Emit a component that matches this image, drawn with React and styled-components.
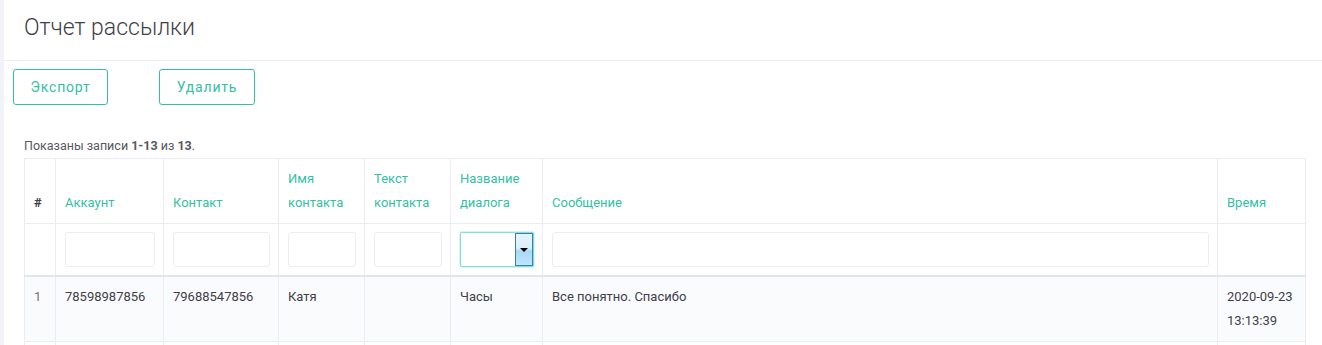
import React from 'react'
import styled, { createGlobalStyle } from 'styled-components'

const GlobalStyle = createGlobalStyle`
  html, body {
    margin: 0;
    padding: 0;
    background: #f2f3f8;
    font-family: Roboto, "Noto Sans", "Liberation Sans", sans-serif;
  }
`

const Page = styled.div`
  display: flex;
  height: 345px;
  overflow: hidden;
  padding-left: 4px;
`

const Portlet = styled.div`
  flex: 1;
  background: #fff;
  display: flex;
  flex-direction: column;
`

const PortletHead = styled.div`
  height: 61px;
  flex-shrink: 0;
  border-bottom: 1px solid #ebedf2;
  display: flex;
  align-items: center;
  padding-left: 20px;
  padding-bottom: 6px;
  box-sizing: border-box;
`

const Title = styled.h3`
  margin: 0;
  font-size: 23px;
  font-weight: 300;
  color: #3f4047;
`

const Toolbar = styled.div`
  display: flex;
  gap: 51px;
  padding: 8px 0 0 9px;
`

const OutlineButton = styled.button`
  height: 36px;
  width: ${p => p.w}px;
  background: #fff;
  border: 1px solid #34bfa3;
  border-radius: 3px;
  color: #34bfa3;
  font-family: inherit;
  font-size: 14px;
  font-weight: 400;
  letter-spacing: 0.8px;
  padding: 0;
  cursor: pointer;
`

const Summary = styled.div`
  margin: 33px 0 4px 20px;
  font-size: 12.5px;
  color: #575962;
  line-height: 16px;
  b { font-weight: 700; }
`

const TableWrap = styled.div`
  padding: 0 13px 0 20px;
`

const Table = styled.table`
  width: 1282px;
  border-collapse: collapse;
  table-layout: fixed;
  font-size: 13px;
  color: #575962;
`

const Th = styled.th`
  border: 1px solid #ebedf2;
  padding: 8px 9px;
  line-height: 24px;
  vertical-align: bottom;
  text-align: left;
  color: ${p => (p.plain ? '#3f4047' : '#34bfa3')};
  font-weight: ${p => (p.plain ? 700 : 400)};
`

const FilterCell = styled.td`
  border: 1px solid #ebedf2;
  border-bottom: 2px solid #e2e5ec;
  padding: 8px 8px 8px 9px;
`

const FilterInput = styled.input`
  display: block;
  width: 100%;
  height: 35px;
  box-sizing: border-box;
  border: 1px solid #ebedf2;
  border-radius: 3px;
  background: #fff;
  outline: none;
`

const SelectBox = styled.div`
  display: flex;
  height: 35px;
  box-sizing: border-box;
  border: 1px solid #7fe0d3;
  box-shadow: 0 0 0 1px #d6f5f0;
  border-radius: 2px;
  background: #fff;
  justify-content: flex-end;
`

const SelectArrow = styled.div`
  width: 16px;
  border: 1px solid #3c7fb1;
  background: linear-gradient(#e6f4fc 0%, #dcf0fb 45%, #a7d9f5 55%, #bee6fd 100%);
  display: flex;
  align-items: center;
  justify-content: center;
  &::after {
    content: '';
    border-left: 4px solid transparent;
    border-right: 4px solid transparent;
    border-top: 4px solid #000;
  }
`

const Row = styled.tr`
  background: ${p => (p.odd ? '#fafbfd' : '#fff')};
`

const Td = styled.td`
  border: 1px solid #ebedf2;
  padding: 8px 9px;
  line-height: 24px;
  vertical-align: top;
  color: ${p => (p.muted ? '#6f727d' : '#3f4047')};
  height: 47px;
`

const columns = [31, 108, 115, 86, 86, 92, 675, 88]

const rows = [
  ['1', '78598987856', '79688547856', 'Катя', '', 'Часы', 'Все понятно. Спасибо', '2020-09-23 13:13:39'],
  ['', '', '', '', '', '', '', ''],
]

export default function App() {
  return (
    <>
      <GlobalStyle />
      <Page>
        <Portlet>
          <PortletHead>
            <Title>Отчет рассылки</Title>
          </PortletHead>
          <Toolbar>
            <OutlineButton w={95}>Экспорт</OutlineButton>
            <OutlineButton w={96}>Удалить</OutlineButton>
          </Toolbar>
          <Summary>
            Показаны записи <b>1-13</b> из <b>13</b>.
          </Summary>
          <TableWrap>
            <Table>
              <colgroup>
                {columns.map((w, i) => <col key={i} style={{ width: w }} />)}
              </colgroup>
              <thead>
                <tr>
                  <Th plain>#</Th>
                  <Th>Аккаунт</Th>
                  <Th>Контакт</Th>
                  <Th>Имя контакта</Th>
                  <Th>Текст контакта</Th>
                  <Th>Название диалога</Th>
                  <Th>Сообщение</Th>
                  <Th>Время</Th>
                </tr>
                <tr>
                  <FilterCell />
                  <FilterCell><FilterInput /></FilterCell>
                  <FilterCell><FilterInput /></FilterCell>
                  <FilterCell><FilterInput /></FilterCell>
                  <FilterCell><FilterInput /></FilterCell>
                  <FilterCell>
                    <SelectBox><SelectArrow /></SelectBox>
                  </FilterCell>
                  <FilterCell><FilterInput /></FilterCell>
                  <FilterCell />
                </tr>
              </thead>
              <tbody>
                {rows.map((r, i) => (
                  <Row key={i} odd={i % 2 === 0}>
                    {r.map((c, j) => (
                      <Td key={j} muted={j === 0}>{c}</Td>
                    ))}
                  </Row>
                ))}
              </tbody>
            </Table>
          </TableWrap>
        </Portlet>
      </Page>
    </>
  )
}
